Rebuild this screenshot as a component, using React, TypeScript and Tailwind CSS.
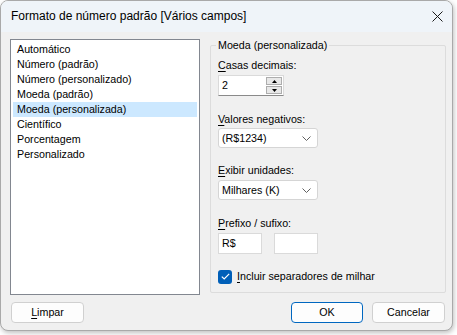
import React from "react";

function U({ c }: { c: string }) {
  return <span className="underline underline-offset-[2px] decoration-[1px]">{c}</span>;
}

function Chevron() {
  return (
    <svg width="9" height="5" viewBox="0 0 9 5" className="shrink-0">
      <path d="M0.5 0.5 L4.5 4.5 L8.5 0.5" fill="none" stroke="#606060" strokeWidth="1" />
    </svg>
  );
}

function Select({ value }: { value: string }) {
  return (
    <div className="w-[100px] h-[20px] bg-white border border-[#d5d5d5] rounded-[3px] flex items-center justify-between pl-[3px] pr-[6px] text-black">
      <span>{value}</span>
      <Chevron />
    </div>
  );
}

export default function App() {
  const items = [
    "Automático",
    "Número (padrão)",
    "Número (personalizado)",
    "Moeda (padrão)",
    "Moeda (personalizada)",
    "Científico",
    "Porcentagem",
    "Personalizado",
  ];
  return (
    <div className="w-[457px] h-[335px] bg-white font-['Liberation_Sans',Arial,sans-serif]">
      <div className="w-[453px] h-[331px] rounded-[8px] border border-[#a9a9a9] overflow-hidden shadow-[1px_2px_5px_rgba(0,0,0,0.25)] flex flex-col bg-[#f0f0f0] text-[10.7px] leading-[15px] text-black">
        <div className="h-[31px] bg-[#eff4f9] flex items-center justify-between pl-[10px] pr-[8px] shrink-0">
          <span className="text-[12px]">Formato de número padrão [Vários campos]</span>
          <svg width="11" height="11" viewBox="0 0 11 11" className="mr-[1px]">
            <path d="M0.5 0.5 L10.5 10.5 M10.5 0.5 L0.5 10.5" stroke="#1a1a1a" strokeWidth="1" />
          </svg>
        </div>
        <div className="flex-1 flex flex-col pl-[9px] pt-[7px]">
          <div className="flex">
            <div className="w-[190px] h-[256px] bg-white border border-[#828790] pt-[2px] pl-[2px] pr-[2px]">
              {items.map((it, i) => (
                <div
                  key={it}
                  className={
                    "h-[15px] leading-[15px] pl-[4px] " +
                    (i === 4 ? "bg-[#cce8ff]" : "")
                  }
                >
                  {it}
                </div>
              ))}
            </div>
            <div className="relative ml-[10px] mt-[6px] w-[236px] h-[248px] border border-[#dcdcdc] rounded-[2px] flex flex-col pl-[7px]">
              <span className="absolute left-[5px] top-[-8px] px-[2px] bg-[#f0f0f0] leading-[15px]">
                Moeda (personalizada)
              </span>
              <div className="mt-[12px]">
                <U c="C" />asas decimais:
              </div>
              <div className="mt-[2px] w-[66px] h-[21px] bg-white border border-[#dadada] border-b-[#8a8a8a] flex items-center justify-between pl-[3px] pr-[1px]">
                <span>2</span>
                <div className="w-[16px] h-[17px] flex flex-col">
                  <div className="h-[8px] border border-[#adadad] bg-[#e8e8e8] flex items-center justify-center">
                    <svg width="5" height="3" viewBox="0 0 5 3"><path d="M0 3 L2.5 0 L5 3 Z" fill="#000" /></svg>
                  </div>
                  <div className="h-[8px] mt-[1px] border border-[#adadad] bg-[#e8e8e8] flex items-center justify-center">
                    <svg width="5" height="3" viewBox="0 0 5 3"><path d="M0 0 L2.5 3 L5 0 Z" fill="#000" /></svg>
                  </div>
                </div>
              </div>
              <div className="mt-[16px]">
                <U c="V" />alores negativos:
              </div>
              <div className="mt-[1px]">
                <Select value="(R$1234)" />
              </div>
              <div className="mt-[15px]">
                <U c="E" />xibir unidades:
              </div>
              <div className="mt-[2px]">
                <Select value="Milhares (K)" />
              </div>
              <div className="mt-[16px]">
                <U c="P" />refixo / sufixo:
              </div>
              <div className="mt-[2px] flex gap-[12px]">
                <div className="w-[44px] h-[21px] bg-white border border-[#dadada] pl-[3px] flex items-center">R$</div>
                <div className="w-[44px] h-[21px] bg-white border border-[#dadada]"></div>
              </div>
              <div className="mt-[15px] flex items-center gap-[5px]">
                <div className="w-[14px] h-[14px] rounded-[3px] bg-[#005fb8] flex items-center justify-center">
                  <svg width="9" height="7" viewBox="0 0 9 7">
                    <path d="M0.8 3.6 L3.2 6 L8.2 0.8" fill="none" stroke="#fff" strokeWidth="1.2" />
                  </svg>
                </div>
                <span>
                  <U c="I" />ncluir separadores de milhar
                </span>
              </div>
            </div>
          </div>
          <div className="mt-[7px] flex items-center pr-[7px]">
            <button className="w-[73px] h-[21px] rounded-[4px] border border-[#d0d0d0] bg-[#fdfdfd] leading-[15px] ml-[1px]">
              <U c="L" />impar
            </button>
            <div className="flex-1" />
            <button className="w-[72px] h-[21px] rounded-[4px] border border-[#0067c0] bg-[#fdfdfd] leading-[15px]">
              OK
            </button>
            <button className="ml-[9px] w-[73px] h-[21px] rounded-[4px] border border-[#d0d0d0] bg-[#fdfdfd] leading-[15px]">
              Cancelar
            </button>
          </div>
        </div>
      </div>
    </div>
  );
}
